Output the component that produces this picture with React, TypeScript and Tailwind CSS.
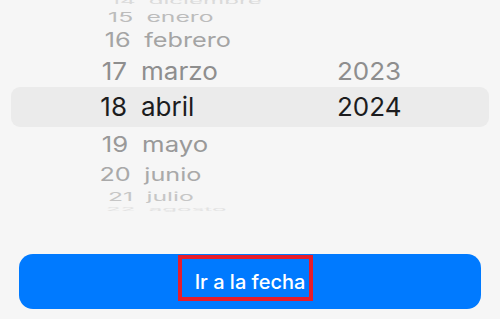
import React from 'react';

type Row = {
  day: string;
  month: string;
  year?: string;
  h: string;
  scale: string;
  color: string;
  selected?: boolean;
};

const rows: Row[] = [
  { day: '14', month: 'diciembre', h: 'h-[9px]', scale: 'scale-x-[0.93] scale-y-[0.3] -translate-y-[4px]', color: 'text-[#dadada]' },
  { day: '15', month: 'enero', h: 'h-[16px]', scale: 'scale-x-[0.95] scale-y-[0.5]', color: 'text-[#bcbcbc]' },
  { day: '16', month: 'febrero', h: 'h-[30px]', scale: 'scale-x-[0.97] scale-y-[0.75]', color: 'text-[#a4a4a4]' },
  { day: '17', month: 'marzo', year: '2023', h: 'h-[32px]', scale: 'scale-x-100 scale-y-[0.95]', color: 'text-[#8e8e8e]' },
  { day: '18', month: 'abril', year: '2024', h: 'h-[40px]', scale: 'scale-100', color: 'text-[#1c1c1e]', selected: true },
  { day: '19', month: 'mayo', h: 'h-[36px]', scale: 'scale-x-[0.99] scale-y-[0.8]', color: 'text-[#999999]' },
  { day: '20', month: 'junio', h: 'h-[24px]', scale: 'scale-x-[0.97] scale-y-[0.7]', color: 'text-[#a9a9a9]' },
  { day: '21', month: 'julio', h: 'h-[20px]', scale: 'scale-x-[0.95] scale-y-[0.45]', color: 'text-[#c6c6c6]' },
  { day: '22', month: 'agosto', h: 'h-[4px]', scale: 'scale-x-[0.93] scale-y-[0.18]', color: 'text-[#e2e2e2]' },
];

function PickerRow({ row }: { row: Row }) {
  return (
    <div
      className={`${row.h} flex items-center ${
        row.selected ? 'mx-[11px] rounded-[9px] bg-[#ebebeb]' : ''
      }`}
    >
      <div
        className={`flex w-full origin-center items-center text-[26px] leading-none ${row.scale} ${row.color} ${
          row.selected ? '-mx-[11px] w-[500px] shrink-0' : ''
        }`}
      >
        <span className="w-[127px] text-right">{row.day}</span>
        <span className="ml-[14px] w-[196px]">{row.month}</span>
        <span>{row.year}</span>
      </div>
    </div>
  );
}

export default function App() {
  return (
    <div
      className="h-[319px] w-[500px] overflow-hidden bg-[#f6f6f6]"
      style={{ fontFamily: 'Inter, "Noto Sans", sans-serif' }}
    >
      <div className="flex flex-col">
        {rows.map((r) => (
          <PickerRow key={r.day} row={r} />
        ))}
      </div>

      <div className="mt-[43px] px-[19px]">
        <button className="relative flex h-[55px] w-full items-center justify-center rounded-[14px] bg-[#007aff] text-[20px] font-medium text-white">
          Ir a la fecha
          <span className="absolute left-[159px] top-[1px] h-[46px] w-[135px] border-4 border-[#e51d2c]" />
        </button>
      </div>
    </div>
  );
}
